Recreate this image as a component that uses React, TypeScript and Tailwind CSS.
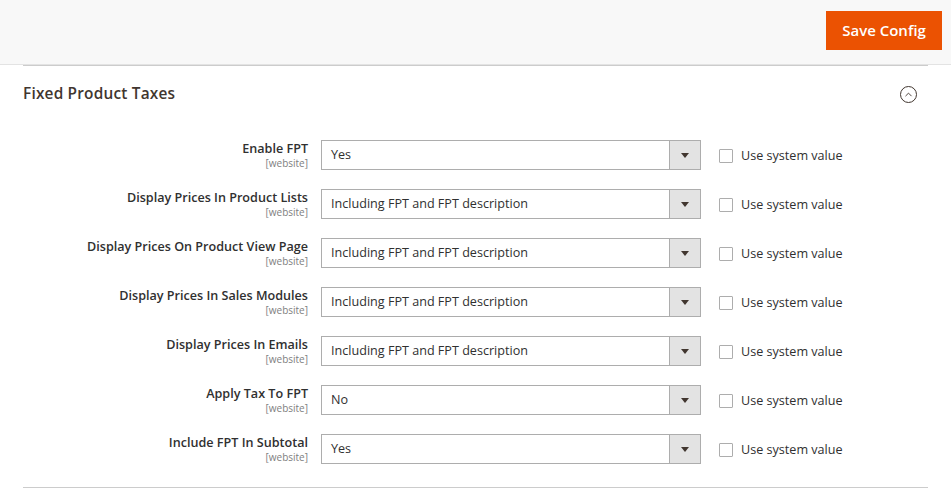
import { ChevronUp } from 'lucide-react'

const rows = [
  { label: 'Enable FPT', value: 'Yes' },
  { label: 'Display Prices In Product Lists', value: 'Including FPT and FPT description' },
  { label: 'Display Prices On Product View Page', value: 'Including FPT and FPT description' },
  { label: 'Display Prices In Sales Modules', value: 'Including FPT and FPT description' },
  { label: 'Display Prices In Emails', value: 'Including FPT and FPT description' },
  { label: 'Apply Tax To FPT', value: 'No' },
  { label: 'Include FPT In Subtotal', value: 'Yes' },
]

function ConfigRow({ label, value }: { label: string; value: string }) {
  return (
    <div className="flex items-start">
      <div className="w-[285px] pt-[1px] text-right">
        <div className="text-[12.6px] font-semibold text-[#303030] leading-[15px]">{label}</div>
        <div className="text-[10px] text-[#808080] leading-[12px] mt-[1px]">[website]</div>
      </div>
      <div className="ml-[13px] flex h-[30px] w-[380px] border border-[#adadad] bg-white">
        <div className="flex-1 pl-[9px] flex items-center text-[12.6px] text-[#303030]">{value}</div>
        <div className="w-[31px] border-l border-[#adadad] bg-[#e3e3e3] flex items-center justify-center">
          <span className="block w-0 h-0 border-l-[4px] border-r-[4px] border-t-[5px] border-l-transparent border-r-transparent border-t-[#41362f]" />
        </div>
      </div>
      <label className="ml-[18px] flex h-[30px] items-center gap-[8px] pt-[2px]">
        <span className="block h-[14px] w-[14px] border border-[#adadad] bg-white rounded-[1px]" />
        <span className="text-[12.6px] text-[#303030]">Use system value</span>
      </label>
    </div>
  )
}

export default function App() {
  return (
    <div className="w-[951px] h-[503px] bg-white overflow-hidden" style={{ fontFamily: '"Open Sans", "Noto Sans", sans-serif' }}>
      <div className="h-[65px] bg-[#f8f8f8] border-b border-[#e3e3e3] flex items-start justify-end pr-[9px] pt-[11px]">
        <button className="h-[39px] w-[116px] bg-[#eb5202] text-white text-[15px] font-semibold">Save Config</button>
      </div>
      <div className="mx-[23px] border-t border-[#cccccc] border-b">
        <div className="h-[56px] flex items-center justify-between">
          <h2 className="text-[15.4px] font-semibold text-[#41362f] tracking-[0.2px]">Fixed Product Taxes</h2>
          <div className="mr-[11px] mt-[1px] w-[17px] h-[17px] rounded-full border border-[#41362f] flex items-center justify-center">
            <ChevronUp className="w-[11px] h-[11px] text-[#41362f]" strokeWidth={2} />
          </div>
        </div>
        <div className="flex flex-col gap-[19px] pt-[18px] pb-[23px]">
          {rows.map((r) => (
            <ConfigRow key={r.label} label={r.label} value={r.value} />
          ))}
        </div>
      </div>
    </div>
  )
}
